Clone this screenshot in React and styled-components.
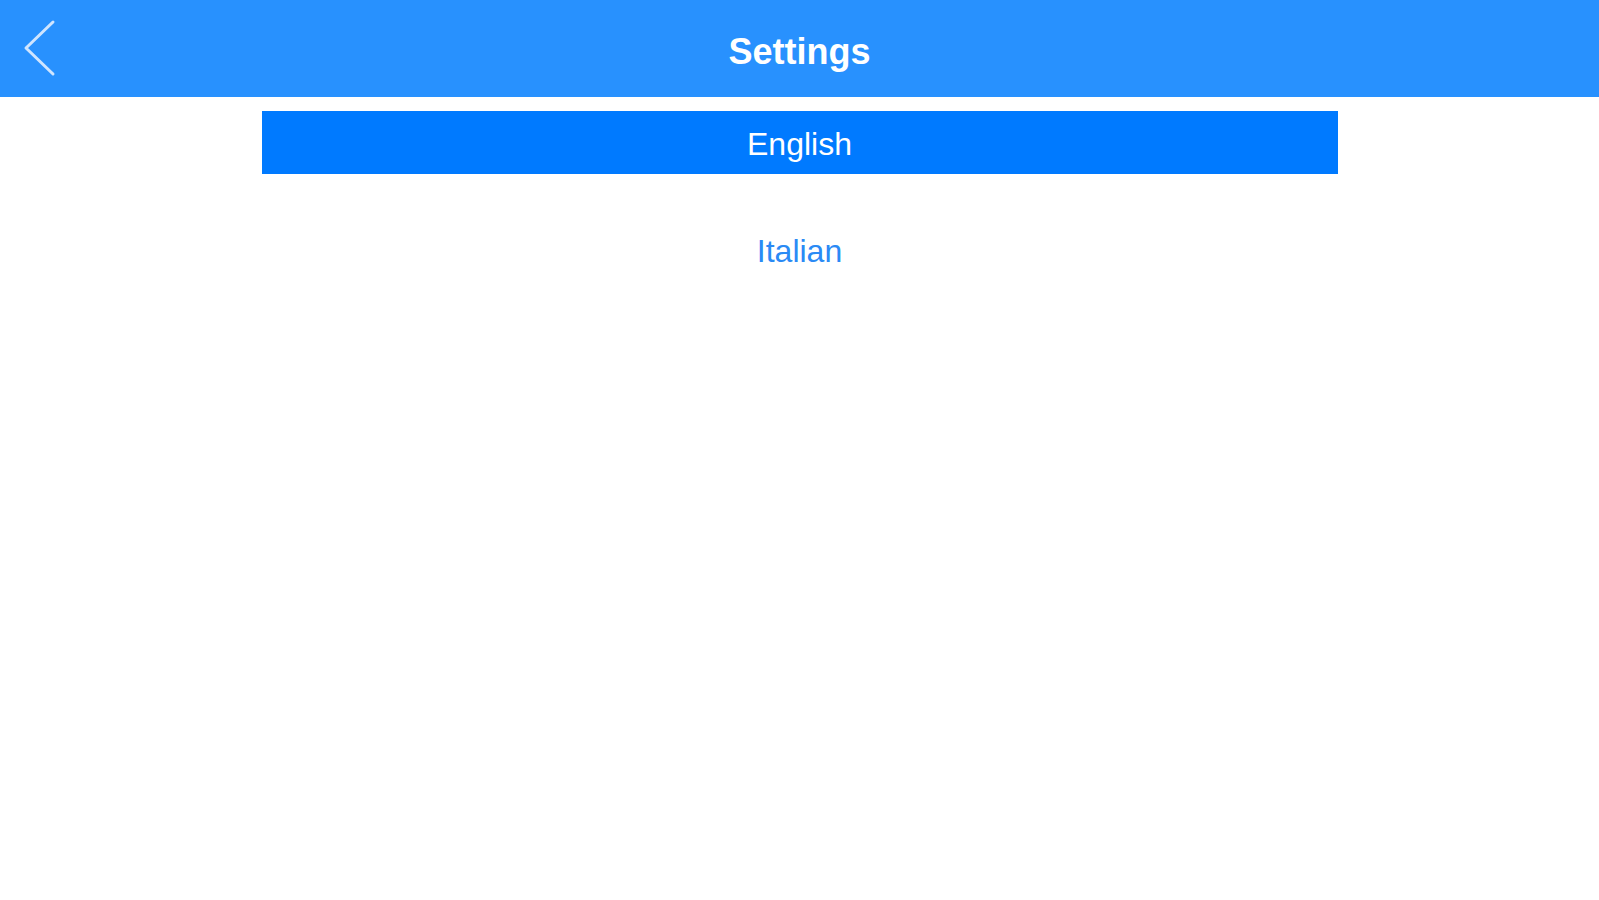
import React, { useState } from 'react';
import styled, { createGlobalStyle } from 'styled-components';

const GlobalStyle = createGlobalStyle`
  html, body {
    margin: 0;
    padding: 0;
    background: #ffffff;
    font-family: "Liberation Sans", Arial, sans-serif;
  }
`;

const Page = styled.div`
  width: 100%;
  min-height: 900px;
  display: flex;
  flex-direction: column;
  background: #ffffff;
`;

const Header = styled.header`
  height: 97px;
  display: grid;
  grid-template-columns: 120px 1fr 120px;
  align-items: center;
  background-color: #2891fe;
`;

const BackButton = styled.button`
  width: 60px;
  height: 97px;
  padding: 0 0 0 22px;
  border: none;
  background: transparent;
  display: flex;
  align-items: center;
  cursor: pointer;
`;

const Title = styled.h1`
  margin: 0;
  padding-top: 6px;
  text-align: center;
  font-size: 36px;
  font-weight: bold;
  color: #ffffff;
`;

const List = styled.div`
  width: 1076px;
  margin: 14px auto 0;
  display: flex;
  flex-direction: column;
  gap: 44px;
`;

const Option = styled.button`
  height: 63px;
  padding: 4px 0 0;
  border: none;
  display: flex;
  justify-content: center;
  align-items: center;
  font-family: "Liberation Sans", Arial, sans-serif;
  font-size: 32px;
  cursor: pointer;
  background-color: ${(p) => (p.selected ? '#007aff' : 'transparent')};
  color: ${(p) => (p.selected ? '#ffffff' : '#2a8af5')};
`;

const languages = ['English', 'Italian'];

function App() {
  const [lang, setLang] = useState('English');

  return (
    <Page>
      <GlobalStyle />
      <Header>
        <BackButton aria-label="Back">
          <svg width="36" height="60" viewBox="0 0 36 60">
            <polyline
              points="31,3 4,29 31,55"
              fill="none"
              stroke="#cfe5ff"
              strokeWidth="3"
              strokeLinecap="round"
              strokeLinejoin="round"
            />
          </svg>
        </BackButton>
        <Title>Settings</Title>
        <div />
      </Header>
      <List>
        {languages.map((l) => (
          <Option key={l} selected={l === lang} onClick={() => setLang(l)}>
            {l}
          </Option>
        ))}
      </List>
    </Page>
  );
}

export default App;
